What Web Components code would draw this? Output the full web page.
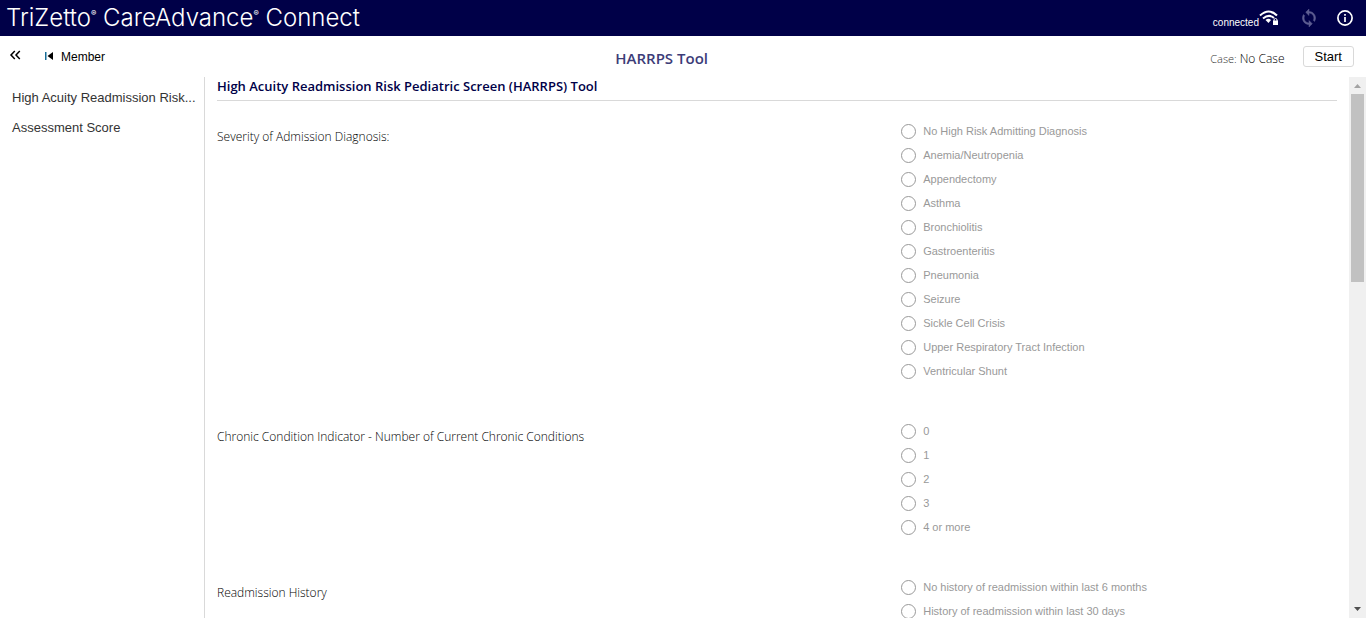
<!DOCTYPE html>
<html lang="en">
<head>
<meta charset="utf-8">
<title>HARRPS Tool</title>
<style>
html, body { height: 100%; }
body { margin: 0; background: #fff; color: #333; font: 12px/16px "Liberation Sans", Arial, sans-serif; --ui: "Open Sans", "Noto Sans", sans-serif; --navy: #000048; --line: #d9d9d9; overflow: hidden; }
</style>
</head>
<body>
<care-app></care-app>
<script>
function define(name, html, setup) {
  const template = document.createElement('template');
  template.innerHTML = html;
  customElements.define(name, class extends HTMLElement {
    connectedCallback() {
      if (this.shadowRoot) return;
      this.attachShadow({ mode: 'open' }).append(template.content.cloneNode(true));
      if (setup) setup(this, this.shadowRoot);
    }
  });
}

define('app-banner', `
<style>
:host { display: flex; align-items: center; justify-content: space-between; height: 36px; padding: 0 12px 0 6px; background: var(--navy); color: #fff; flex: none; }
h1 { margin: 0; font: 300 24px/32px Inter, sans-serif; white-space: nowrap; }
sup { font-size: 8px; line-height: 0; vertical-align: 10px; font-weight: 600; }
.tools { display: flex; align-items: center; }
.status { display: flex; align-items: center; font-size: 10px; line-height: 12px; }
.status span { padding-top: 9px; }
button { display: block; border: 0; padding: 0; background: none; color: inherit; height: 18px; }
.sync { margin: 0 19px 0 22px; color: #5d5d91; }
svg { display: block; }
</style>
<h1>TriZetto<sup>®</sup> CareAdvance<sup>®</sup> Connect</h1>
<div class="tools">
  <div class="status"><span>connected</span>
    <svg width="20" height="18" viewBox="0 0 20 18" fill="none" stroke="#fff" stroke-width="2"><path d="M1 6.500Q10-1.500 18 6.500M4 9.500Q10 4.500 15 9"/><path d="M6.500 11Q9.500 8.500 12 11L9.500 14Z" fill="#fff" stroke="none"/><path d="M14 11.500h5V16h-5z" fill="#fff" stroke="none"/><path d="M15 12v-1a1.500 1.500 0 0 1 3 0V12" stroke-width="1"/></svg>
  </div>
  <button class="sync" aria-label="Synchronize" disabled><svg width="16" height="18" viewBox="3 1 18 22" fill="currentColor" stroke="currentColor" stroke-width=".6"><path d="M12 4V1L8 5l4 4V6c3.310 0 6 2.690 6 6 0 1.010-.25 1.970-.7 2.800l1.460 1.460C19.540 15.030 20 13.570 20 12c0-4.420-3.580-8-8-8zm0 14c-3.310 0-6-2.690-6-6 0-1.010.25-1.970.7-2.800L5.240 7.740C4.460 8.970 4 10.430 4 12c0 4.420 3.580 8 8 8v3l4-4-4-4v3z"/></svg></button>
  <button aria-label="Information"><svg width="18" height="18" viewBox="0 0 18 18" fill="none" stroke="#fff" stroke-width="1.700"><circle cx="9" cy="9" r="7.100"/><path d="M9 8v5M9 5v1.800"/></svg></button>
</div>`);

define('page-toolbar', `
<style>
:host { display: flex; justify-content: space-between; align-items: center; height: 41px; padding: 0 12px 0 9px; flex: none; }
.left, .right { display: flex; align-items: center; }
.left { padding-right: 8px; }
.right { font: 300 12px/16px var(--ui); color: #000; }
.right span { padding-top: 4px; }
button { font: 12px/16px "Liberation Sans", Arial, sans-serif; color: #000; background: none; border: 0; padding: 0; display: flex; align-items: center; }
.member { margin-left: 23px; gap: 8px; }
h2 { margin: 0; padding-top: 2px; font: 600 15px/20px var(--ui); color: #3c3c78; }
.case { font-size: 11px; color: #333; margin-right: 3px; }
.start { height: 21px; margin-left: 18px; padding: 0 11px; border: 1px solid #d9d9d9; border-radius: 3px; font-size: 13px; }
svg { display: block; }
</style>
<div class="left">
  <button aria-label="Collapse navigation"><svg width="13" height="14" viewBox="0 0 13 14" fill="none" stroke="#000" stroke-width="1.500"><path d="M5.800 1 2 5l3.800 4M10.800 1 7 5l3.800 4"/></svg></button>
  <button class="member"><svg width="8" height="10" viewBox="0 0 8 10"><path d="M0 0h1.500v8H0z" fill="#176c97"/><path d="M8 0v8L2.500 4z"/></svg>Member</button>
</div>
<h2>HARRPS Tool</h2>
<div class="right"><span class="case">Case:</span><span>No Case</span><button class="start">Start</button></div>`);

define('section-nav', `
<style>
:host { display: block; box-sizing: border-box; width: 205px; border-right: 1px solid var(--line); padding: 6px 12px; flex: none; }
a { display: block; font-size: 13px; line-height: 30px; color: #333; text-decoration: none; white-space: nowrap; }
</style>
<nav><a href="#screen" title="High Acuity Readmission Risk Pediatric Screen (HARRPS) Tool">High Acuity Readmission Risk...</a><a href="#score">Assessment Score</a></nav>`);

define('question-group', `
<style>
:host { display: block; margin-bottom: 36px; }
.row { display: grid; grid-template-columns: 61% 1fr; }
.question { font: 300 12px/16px var(--ui); color: #000; padding-top: 10px; }
label { display: flex; align-items: center; height: 24px; gap: 7px; font-size: 11px; color: #999; }
input { appearance: none; box-sizing: border-box; width: 15px; height: 15px; margin: 0 0 0 1px; border: 1px solid #999; border-radius: 50%; background: #fff; }
</style>
<div class="row" role="radiogroup" aria-labelledby="question"><div class="question" id="question"><slot></slot></div><div class="options"></div></div>`,
(host, root) => {
  const box = root.querySelector('.options');
  for (const text of host.getAttribute('options').split('|')) {
    const label = document.createElement('label');
    const input = document.createElement('input');
    input.type = 'radio';
    input.name = 'answer';
    input.disabled = true;
    label.append(input, Object.assign(document.createElement('span'), { textContent: text }));
    box.append(label);
  }
});

define('assessment-form', `
<style>
:host { display: block; flex: 1; min-width: 0; padding: 0 12px; overflow: hidden; }
h3 { margin: 0 0 18px; padding: 0 0 5px; border-bottom: 1px solid var(--line); font: 600 13px/18px var(--ui); color: var(--navy); }
</style>
<h3>High Acuity Readmission Risk Pediatric Screen (HARRPS) Tool</h3>
<question-group options="No High Risk Admitting Diagnosis|Anemia/Neutropenia|Appendectomy|Asthma|Bronchiolitis|Gastroenteritis|Pneumonia|Seizure|Sickle Cell Crisis|Upper Respiratory Tract Infection|Ventricular Shunt">Severity of Admission Diagnosis:</question-group>
<question-group options="0|1|2|3|4 or more">Chronic Condition Indicator - Number of Current Chronic Conditions</question-group>
<question-group options="No history of readmission within last 6 months|History of readmission within last 30 days">Readmission History</question-group>`);

define('scroll-rail', `
<style>
:host { display: flex; flex-direction: column; width: 17px; background: #f0f0f0; flex: none; }
svg { display: block; flex: none; }
.track { flex: 1; padding: 0 2px; }
.thumb { height: 37%; background: #c1c1c1; }
</style>
<svg width="17" height="17" viewBox="0 0 17 17"><path d="M5 11h7L8.500 7z" fill="#a3a3a3"/></svg>
<div class="track"><div class="thumb"></div></div>
<svg width="17" height="17" viewBox="0 0 17 17"><path d="M5 6h7L8.500 10z" fill="#505050"/></svg>`);

define('care-app', `
<style>
:host { display: flex; flex-direction: column; height: 100vh; overflow: hidden; }
main { display: flex; flex: 1; min-height: 0; }
</style>
<app-banner></app-banner>
<page-toolbar></page-toolbar>
<main><section-nav></section-nav><assessment-form></assessment-form><scroll-rail></scroll-rail></main>`);
</script>
</body>
</html>
